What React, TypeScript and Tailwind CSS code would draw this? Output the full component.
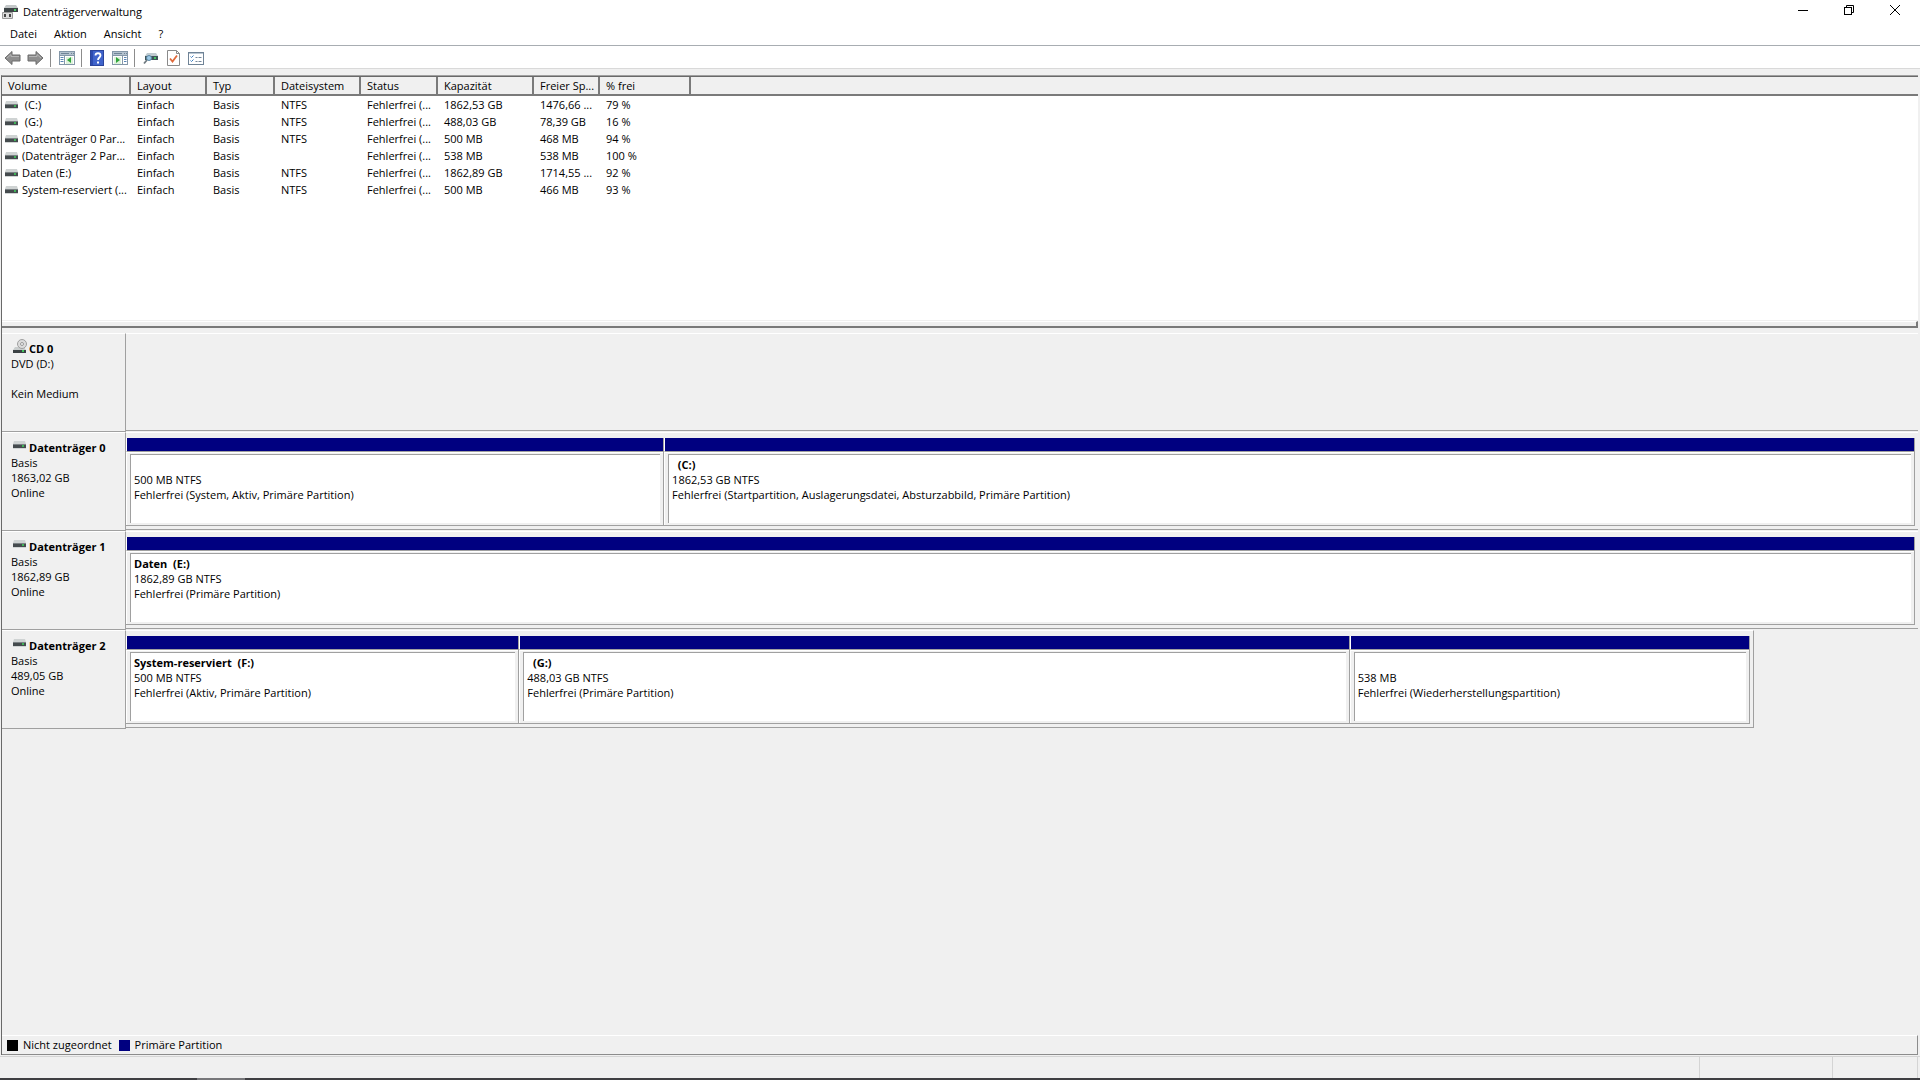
import type { ReactNode } from "react";

type Partition = { name: string; size: string; status: string; weight: number };
type Disk = {
  title: string;
  lines: string[];
  optical?: boolean;
  width?: string;
  partitions: Partition[];
};

const columns = [
  { label: "Volume", width: "w-[129px]" },
  { label: "Layout", width: "w-[76px]" },
  { label: "Typ", width: "w-[68px]" },
  { label: "Dateisystem", width: "w-[86px]" },
  { label: "Status", width: "w-[77px]" },
  { label: "Kapazität", width: "w-[96px]" },
  { label: "Freier Sp...", width: "w-[66px]" },
  { label: "% frei", width: "w-[91px]" },
];

const volumes = [
  [" (C:)", "Einfach", "Basis", "NTFS", "Fehlerfrei (...", "1862,53 GB", "1476,66 ...", "79 %"],
  [" (G:)", "Einfach", "Basis", "NTFS", "Fehlerfrei (...", "488,03 GB", "78,39 GB", "16 %"],
  ["(Datenträger 0 Par...", "Einfach", "Basis", "NTFS", "Fehlerfrei (...", "500 MB", "468 MB", "94 %"],
  ["(Datenträger 2 Par...", "Einfach", "Basis", "", "Fehlerfrei (...", "538 MB", "538 MB", "100 %"],
  ["Daten (E:)", "Einfach", "Basis", "NTFS", "Fehlerfrei (...", "1862,89 GB", "1714,55 ...", "92 %"],
  ["System-reserviert (...", "Einfach", "Basis", "NTFS", "Fehlerfrei (...", "500 MB", "466 MB", "93 %"],
];

const disks: Disk[] = [
  { title: "CD 0", lines: ["DVD (D:)", "", "Kein Medium"], optical: true, partitions: [] },
  {
    title: "Datenträger 0",
    lines: ["Basis", "1863,02 GB", "Online"],
    partitions: [
      { name: "", size: "500 MB NTFS", status: "Fehlerfrei (System, Aktiv, Primäre Partition)", weight: 538 },
      {
        name: "  (C:)",
        size: "1862,53 GB NTFS",
        status: "Fehlerfrei (Startpartition, Auslagerungsdatei, Absturzabbild, Primäre Partition)",
        weight: 1252,
      },
    ],
  },
  {
    title: "Datenträger 1",
    lines: ["Basis", "1862,89 GB", "Online"],
    partitions: [{ name: "Daten  (E:)", size: "1862,89 GB NTFS", status: "Fehlerfrei (Primäre Partition)", weight: 1 }],
  },
  {
    title: "Datenträger 2",
    lines: ["Basis", "489,05 GB", "Online"],
    width: "90.85%",
    partitions: [
      { name: "System-reserviert  (F:)", size: "500 MB NTFS", status: "Fehlerfrei (Aktiv, Primäre Partition)", weight: 393 },
      { name: "  (G:)", size: "488,03 GB NTFS", status: "Fehlerfrei (Primäre Partition)", weight: 831 },
      { name: "", size: "538 MB", status: "Fehlerfrei (Wiederherstellungspartition)", weight: 400 },
    ],
  },
];

function DriveIcon() {
  return (
    <svg width="13" height="8" viewBox="0 0 13 8" className="shrink-0">
      <path d="M1 0h11l1 3H0z" fill="#cfd3d3" />
      <rect y="3" width="13" height="4" fill="#454b4e" />
      <rect y="3" width="13" height="1" fill="#7b8184" />
      <rect x="9" y="4" width="2" height="2" fill="#3fb357" />
      <rect y="7" width="13" height="1" fill="#d0d4d4" />
    </svg>
  );
}

function OpticalIcon() {
  return (
    <svg width="14" height="15" viewBox="0 0 14 15" className="shrink-0">
      <path d="M2 8h9l2 3H0z" fill="#c9cdcd" />
      <circle cx="9" cy="5" r="4.500" fill="#dcdcdc" stroke="#9f9f9f" />
      <circle cx="9" cy="5" r="1.500" fill="#f5f5f5" stroke="#9a9a9a" />
      <rect y="11" width="13" height="3" fill="#3b4144" />
      <rect x="9" y="11" width="2" height="2" fill="#3fc35a" />
    </svg>
  );
}

function AppIcon() {
  return (
    <svg width="16" height="16" viewBox="0 0 16 16">
      <path d="M4 1h10l2 3H2z" fill="#c3c7c8" />
      <rect x="2" y="4" width="14" height="4" fill="#3d4446" />
      <rect x="12" y="5" width="2" height="2" fill="#4cc866" />
      <path d="M.5 8.500h10v6H.5z" fill="#dcdcdc" stroke="#9a9a9a" />
      <rect x="2" y="10" width="2" height="3" fill="#444" />
      <rect x="7" y="10" width="2" height="3" fill="#444" />
    </svg>
  );
}

function ArrowIcon({ flip }: { flip?: boolean }) {
  return (
    <svg width="17" height="16" viewBox="0 0 17 16" className={flip ? "-scale-x-100" : ""}>
      <path d="M1 8l7-6.500v3.500h8v6H8v3.500z" fill="#8f8f8f" stroke="#6a6a6a" strokeLinejoin="round" />
      <path d="M3 8l4-3.500v2h8" fill="none" stroke="#b5b5b5" />
    </svg>
  );
}

// Konsolenfenster mit Baum- bzw. Aktionsbereich
function PaneIcon({ right }: { right?: boolean }) {
  return (
    <svg width="16" height="14" viewBox="0 0 16 14">
      <rect x=".5" y=".5" width="15" height="13" fill="#fff" stroke="#8497a8" />
      <rect x="1" y="1" width="14" height="3" fill="#b4c2ce" />
      <path d="M2 2.500h8M12 2.500h1M14 2.500h1" stroke="#6f8496" />
      <path d="M1 4.500h14" stroke="#8497a8" />
      {right ? (
        <>
          <path d="M10.500 5v8" stroke="#8497a8" />
          <path d="M12 6.500h2.500M12 8.500h2.500M12 10.500h2.500" stroke="#5a85b5" />
          <rect x="2" y="6" width="7" height="7" fill="#dff2dc" />
          <path d="M4 6l4 3-4 3z" fill="#2fa53a" />
        </>
      ) : (
        <>
          <path d="M5.500 5v8" stroke="#8497a8" />
          <path d="M1.500 6.500h3M1.500 8.500h3M1.500 10.500h3" stroke="#5a85b5" />
          <rect x="7" y="6" width="7" height="7" fill="#dff2dc" />
          <path d="M12 6l-4 3 4 3z" fill="#2fa53a" />
        </>
      )}
    </svg>
  );
}

function HelpIcon() {
  return (
    <svg width="14" height="16" viewBox="0 0 14 16">
      <rect x=".5" y=".5" width="13" height="15" fill="#3f63cb" stroke="#2b449b" />
      <rect x="1" y="1" width="2" height="14" fill="#2c4bb0" />
      <path d="M5.500 5.500c0-3 5-3 5 0 0 2-2.500 2-2.500 4.500" fill="none" stroke="#fff" strokeWidth="1.800" />
      <rect x="7" y="11.500" width="2" height="2" fill="#fff" />
    </svg>
  );
}

function RescanIcon() {
  return (
    <svg width="16" height="14" viewBox="0 0 16 14">
      <path d="M4 2h9l2 3H2z" fill="#c0cbd0" />
      <rect x="2" y="5" width="13" height="4" fill="#3f5458" />
      <rect x="11" y="6" width="2" height="2" fill="#45c463" />
      <circle cx="6" cy="7" r="2.500" fill="#9cc9e6" stroke="#5a86a5" />
      <path d="M4 9l-3 3.500" stroke="#6f7a80" strokeWidth="1.800" />
    </svg>
  );
}

function CheckDocIcon() {
  return (
    <svg width="13" height="16" viewBox="0 0 13 16">
      <path d="M.5.5h9l3 3v12H.5z" fill="#fff" stroke="#8a8a8a" />
      <path d="M9.500.5v3h3" fill="none" stroke="#8a8a8a" />
      <path d="M3 8.500l2.500 3 4.500-6" fill="none" stroke="#e0693a" strokeWidth="1.800" />
    </svg>
  );
}

function ListIcon() {
  return (
    <svg width="16" height="13" viewBox="0 0 16 13">
      <rect x=".5" y=".5" width="15" height="12" fill="#fff" stroke="#6f8396" />
      <path d="M1 1.500h14" stroke="#b9c6d2" />
      <path d="M2.500 4.500l1 1 2-2M2.500 8.500l1 1 2-2" fill="none" stroke="#3a7bbf" />
      <path d="M7.500 5.500h2M10.500 5.500h3M7.500 9.500h2M10.500 9.500h3" stroke="#74879a" />
    </svg>
  );
}

function ToolButton({ label, children }: { label: string; children: ReactNode }) {
  return (
    <button aria-label={label} className="flex items-center justify-center">
      {children}
    </button>
  );
}

function Separator() {
  return <div className="h-[18px] w-px bg-[#8c8c8c]" />;
}

function TitleBar() {
  return (
    <div className="flex h-6 items-center pr-[2px] pl-[2px]">
      <AppIcon />
      <h1 className="grow pl-[5px]">Datenträgerverwaltung</h1>
      <div className="flex h-5 self-start">
        <button aria-label="Minimieren" className="flex w-[46px] items-center justify-center">
          <svg width="10" height="10" viewBox="0 0 10 10"><path d="M0 5.500h10" stroke="#000" /></svg>
        </button>
        <button aria-label="Verkleinern" className="flex w-[46px] items-center justify-center">
          <svg width="10" height="10" viewBox="0 0 10 10" fill="none" stroke="#000">
            <rect x=".5" y="2.500" width="7" height="7" />
            <path d="M2.500 2.500v-2h7v7h-2" />
          </svg>
        </button>
        <button aria-label="Schließen" className="flex w-[46px] items-center justify-center">
          <svg width="10" height="10" viewBox="0 0 10 10"><path d="M0 0l10 10M10 0L0 10" stroke="#000" /></svg>
        </button>
      </div>
    </div>
  );
}

function Toolbar() {
  return (
    <div className="flex h-[23px] items-center gap-[6px] border-b border-[#d9d9d9] bg-white pt-[2px] pl-1">
      <div className="flex gap-[6px]">
        <ToolButton label="Zurück"><ArrowIcon /></ToolButton>
        <ToolButton label="Vorwärts"><ArrowIcon flip /></ToolButton>
      </div>
      <div className="flex items-center gap-2">
        <Separator />
        <ToolButton label="Konsolenstruktur"><PaneIcon /></ToolButton>
      </div>
      <div className="flex items-center gap-2">
        <Separator />
        <ToolButton label="Hilfe"><HelpIcon /></ToolButton>
        <ToolButton label="Aktionsbereich"><PaneIcon right /></ToolButton>
      </div>
      <div className="flex items-center gap-2">
        <Separator />
        <ToolButton label="Datenträger neu einlesen"><RescanIcon /></ToolButton>
        <ToolButton label="Eigenschaften"><CheckDocIcon /></ToolButton>
        <ToolButton label="Einstellungen"><ListIcon /></ToolButton>
      </div>
    </div>
  );
}

function VolumeTable() {
  return (
    <div className="h-[244px] border-t border-[#696969] bg-white">
      <table className="w-full table-fixed border-separate border-spacing-0 text-left">
        <thead>
          <tr className="bg-[#f0f0f0]">
            {columns.map((c) => (
              <th
                key={c.label}
                className={`${c.width} h-[19px] overflow-hidden border-r-2 border-b-2 border-r-[#7a7a7a] border-b-[#7a7a7a] p-0 pt-px pl-[6px] leading-4 font-normal whitespace-nowrap`}
              >
                {c.label}
              </th>
            ))}
            <th className="border-b-2 border-[#7a7a7a] p-0" />
          </tr>
        </thead>
        <tbody>
          {volumes.map((row) => (
            <tr key={row[0]}>
              {row.map((cell, i) => (
                <td key={i} className={`h-[17px] overflow-hidden p-0 leading-4 whitespace-pre ${i === 0 ? "pl-[3px]" : "pl-[6px]"}`}>
                  {i === 0 ? (
                    <div className="flex items-center gap-1">
                      <DriveIcon />
                      <span>{cell}</span>
                    </div>
                  ) : (
                    cell
                  )}
                </td>
              ))}
              <td />
            </tr>
          ))}
        </tbody>
      </table>
    </div>
  );
}

function PartitionBox({ part }: { part: Partition }) {
  return (
    <button
      className="flex min-w-0 basis-0 flex-col border-r border-b border-[#a0a0a0] text-left"
      style={{ flexGrow: part.weight }}
    >
      <span className="block h-[14px] w-full border-b border-l border-b-[#a0a0a0] border-l-white bg-[#000080]" />
      <span className="flex w-full grow flex-col border-t border-l border-white pt-px pr-[3px] pb-[2px] pl-[3px]">
        <span className="block w-full grow overflow-hidden border-t border-l border-[#a0a0a0] bg-white pt-[2px] pl-[3px] leading-[15px] whitespace-pre">
          <span className="block h-[15px] font-bold">{part.name}</span>
          <span className="block">{part.size}</span>
          <span className="block">{part.status}</span>
        </span>
      </span>
    </button>
  );
}

function DiskRow({ disk }: { disk: Disk }) {
  return (
    <div className="flex h-[99px]">
      <div className="w-[124px] shrink-0 border-t border-r border-b border-t-white border-r-[#a0a0a0] border-b-[#a0a0a0] pt-[7px] pl-[9px] leading-[15px]">
        <div className="flex h-[15px] items-end gap-[3px] pl-[2px] font-bold">
          <span className={`flex h-[15px] w-[13px] items-end ${disk.optical ? "pb-[2px]" : "pb-[6px]"}`}>
            {disk.optical ? <OpticalIcon /> : <DriveIcon />}
          </span>
          {disk.title}
        </div>
        {disk.lines.map((line, i) => (
          <div key={i} className="h-[15px]">{line}</div>
        ))}
      </div>
      <div className="min-w-0 grow pb-px">
        <div
          className={`flex h-full border-t border-b border-t-white border-b-[#a0a0a0] pt-[5px] pr-[3px] pb-[3px] ${disk.width ? "border-r" : ""} border-r-[#a0a0a0]`}
          style={{ width: disk.width ?? "100%" }}
        >
          {disk.partitions.map((p) => (
            <PartitionBox key={p.size} part={p} />
          ))}
        </div>
      </div>
    </div>
  );
}

export default function App() {
  return (
    <div className="flex min-h-screen flex-col bg-[#f0f0f0] font-['Open_Sans','Noto_Sans',sans-serif] text-[11px] leading-4 text-black">
      <header className="bg-white">
        <TitleBar />
        <nav className="flex h-[22px] items-center gap-[17px] border-b border-[#a8adb2] pb-[2px] pl-[10px]">
          <button>Datei</button>
          <button>Aktion</button>
          <button>Ansicht</button>
          <button>?</button>
        </nav>
        <Toolbar />
      </header>

      <main className="mt-[6px] mr-[2px] ml-px flex grow flex-col border-t border-l border-t-[#a0a0a0] border-l-[#696969]">
        <VolumeTable />
        <div className="mt-px h-[7px] border-t border-r-2 border-b-2 border-t-white border-r-[#7a7a7a] border-b-[#7a7a7a]" />
        <div className="mt-[5px] grow">
          {disks.map((d) => (
            <DiskRow key={d.title} disk={d} />
          ))}
        </div>
        <ul className="flex h-5 items-center gap-[7px] border-t border-r border-b border-t-white border-r-[#8c8c8c] border-b-[#8c8c8c] pl-[5px]">
          <li className="flex items-center gap-[5px]">
            <span className="size-[11px] bg-black" />
            Nicht zugeordnet
          </li>
          <li className="flex items-center gap-[5px]">
            <span className="size-[11px] bg-[#000080]" />
            Primäre Partition
          </li>
        </ul>
      </main>

      <footer className="mt-px flex h-[22px] justify-end border-t border-[#d4d4d4] pr-[2px]">
        <div className="w-[133px] border-l border-[#d4d4d4]" />
        <div className="w-[86px] border-r border-l border-[#d4d4d4]" />
      </footer>
      <div className="flex h-[2px] bg-[#3f3f42]">
        <div className="ml-[197px] w-12 bg-[#77777a]" />
      </div>
    </div>
  );
}
